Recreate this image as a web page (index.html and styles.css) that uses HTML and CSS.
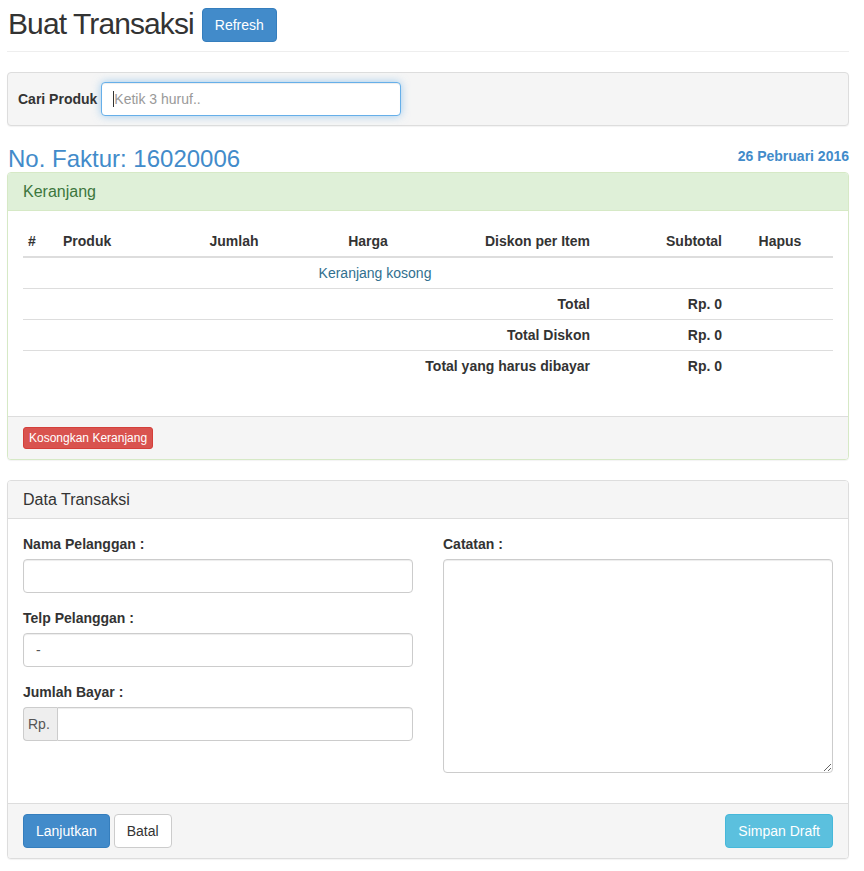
FILE: index.html
```html
<!DOCTYPE html>
<html lang="id">
<head>
<meta charset="utf-8">
<title>Buat Transaksi</title>
<link rel="stylesheet" href="styles.css">
</head>
<body>
<div class="container">
  <div class="page-header">
    <h1 class="page-title">Buat Transaksi</h1>
    <button class="btn btn-primary">Refresh</button>
  </div>

  <div class="panel panel-default search-panel">
    <div class="search-body">
      <label class="search-label">Cari Produk</label>
      <div class="search-wrap">
        <input class="form-control search-input focus" type="text" placeholder="Ketik 3 huruf..">
        <span class="caret-line"></span>
      </div>
    </div>
  </div>

  <div class="faktur-row">
    <h3 class="faktur">No. Faktur: 16020006</h3>
    <div class="tanggal">26 Pebruari 2016</div>
  </div>

  <div class="panel panel-success">
    <div class="panel-heading">Keranjang</div>
    <div class="panel-body">
      <table class="table">
        <colgroup>
          <col class="c1"><col class="c2"><col class="c3"><col class="c4"><col class="c5"><col class="c6"><col class="c7">
        </colgroup>
        <thead>
          <tr>
            <th>#</th>
            <th>Produk</th>
            <th class="center">Jumlah</th>
            <th class="center">Harga</th>
            <th class="right">Diskon per Item</th>
            <th class="right">Subtotal</th>
            <th class="center">Hapus</th>
          </tr>
        </thead>
        <tbody>
          <tr>
            <td colspan="6" class="center kosong">Keranjang kosong</td>
            <td></td>
          </tr>
          <tr>
            <td colspan="5" class="right bold">Total</td>
            <td class="right bold">Rp. 0</td>
            <td></td>
          </tr>
          <tr>
            <td colspan="5" class="right bold">Total Diskon</td>
            <td class="right bold">Rp. 0</td>
            <td></td>
          </tr>
          <tr>
            <td colspan="5" class="right bold">Total yang harus dibayar</td>
            <td class="right bold">Rp. 0</td>
            <td></td>
          </tr>
        </tbody>
      </table>
    </div>
    <div class="panel-footer">
      <button class="btn btn-danger btn-xs">Kosongkan Keranjang</button>
    </div>
  </div>

  <div class="panel panel-default">
    <div class="panel-heading">Data Transaksi</div>
    <div class="panel-body">
      <div class="form-grid">
        <div class="col">
          <div class="form-group">
            <label>Nama Pelanggan :</label>
            <input class="form-control" type="text">
          </div>
          <div class="form-group">
            <label>Telp Pelanggan :</label>
            <input class="form-control" type="text" value="-">
          </div>
          <div class="form-group">
            <label>Jumlah Bayar :</label>
            <div class="input-group">
              <span class="addon">Rp.</span>
              <input class="form-control group-input" type="text">
            </div>
          </div>
        </div>
        <div class="col">
          <div class="form-group">
            <label>Catatan :</label>
            <textarea class="form-control notes"></textarea>
          </div>
        </div>
      </div>
    </div>
    <div class="panel-footer footer-split">
      <div class="btn-row">
        <button class="btn btn-primary">Lanjutkan</button>
        <button class="btn btn-default">Batal</button>
      </div>
      <button class="btn btn-info">Simpan Draft</button>
    </div>
  </div>
</div>
</body>
</html>
```
FILE: styles.css
```css
* { box-sizing: border-box; }
html, body { margin: 0; padding: 0; background: #fff; }
body {
  font-family: "Liberation Sans", Arial, Helvetica, sans-serif;
  font-size: 14px;
  line-height: 20px;
  color: #333;
}
.container {
  width: 842px;
  margin-left: 7px;
}
.page-header {
  display: flex;
  align-items: flex-start;
  gap: 8px;
  padding: 8px 0 9px 1px;
  border-bottom: 1px solid #eee;
  margin-bottom: 20px;
}
.page-title {
  margin: 0;
  font-size: 30px;
  font-weight: 500;
  line-height: 32px;
  letter-spacing: -0.9px;
  color: #333;
}
.btn {
  display: inline-block;
  font-family: inherit;
  font-size: 14px;
  line-height: 20px;
  padding: 6px 12px;
  border: 1px solid transparent;
  border-radius: 4px;
  cursor: pointer;
  white-space: nowrap;
}
.btn-primary { background: #428bca; border-color: #357ebd; color: #fff; }
.btn-default { background: #fff; border-color: #ccc; color: #333; }
.btn-info { background: #5bc0de; border-color: #46b8da; color: #fff; }
.btn-danger { background: #d9534f; border-color: #d43f3a; color: #fff; }
.btn-xs { font-size: 12px; line-height: 18px; padding: 1px 5px; border-radius: 3px; }

.panel {
  background: #fff;
  border: 1px solid #ddd;
  border-radius: 4px;
  box-shadow: 0 1px 1px rgba(0,0,0,.05);
  margin-bottom: 20px;
}
.panel-heading {
  padding: 10px 15px;
  font-size: 16px;
  line-height: 17px;
  border-bottom: 1px solid #ddd;
  border-radius: 3px 3px 0 0;
  background: #f5f5f5;
  color: #333;
}
.panel-success { border-color: #d6e9c6; }
.panel-success .panel-heading { background: #dff0d8; border-color: #d6e9c6; color: #3c763d; }
.panel-body { padding: 15px; }
.panel-footer {
  padding: 10px 15px;
  background: #f5f5f5;
  border-top: 1px solid #ddd;
  border-radius: 0 0 3px 3px;
}
.footer-split { display: flex; justify-content: space-between; align-items: center; }
.btn-row { display: flex; gap: 4px; }

.search-panel { background: #f5f5f5; }
.search-body {
  display: flex;
  align-items: center;
  gap: 4px;
  padding: 9px 10px;
}
.search-label { font-weight: bold; }
.search-wrap { position: relative; width: 300px; }
.form-control {
  display: block;
  width: 100%;
  height: 34px;
  padding: 6px 12px;
  font-family: inherit;
  font-size: 14px;
  line-height: 20px;
  color: #555;
  background: #fff;
  border: 1px solid #ccc;
  border-radius: 4px;
  box-shadow: inset 0 1px 1px rgba(0,0,0,.075);
  outline: none;
}
.form-control::placeholder { color: #999; }
.form-control.focus {
  border-color: #66afe9;
  box-shadow: inset 0 1px 1px rgba(0,0,0,.075), 0 0 8px rgba(102,175,233,.6);
}
.caret-line {
  position: absolute;
  left: 12px;
  top: 9px;
  width: 1px;
  height: 16px;
  background: #333;
}

.faktur-row {
  display: flex;
  justify-content: space-between;
  align-items: flex-start;
}
.faktur {
  margin: 0;
  font-size: 24px;
  font-weight: 500;
  line-height: 26px;
  color: #428bca;
  padding-left: 1px;
}
.tanggal {
  font-weight: bold;
  color: #428bca;
  line-height: 20px;
}

.table {
  width: 100%;
  border-collapse: collapse;
  border-spacing: 0;
  table-layout: fixed;
  margin-bottom: 20px;
}
.c1 { width: 35px; }
.c2 { width: 122px; }
.c3 { width: 108px; }
.c4 { width: 160px; }
.c5 { width: 147px; }
.c6 { width: 132px; }
.c7 { width: 106px; }
.table th, .table td {
  padding: 5px;
  line-height: 20px;
  text-align: left;
  vertical-align: top;
}
.table th { font-weight: bold; border-bottom: 2px solid #ddd; }
.table td { border-top: 1px solid #ddd; }
.table th.center, .table td.center { text-align: center; }
.table th.right, .table td.right { text-align: right; }
.bold { font-weight: bold; }
.kosong { color: #31708f; }

.form-grid {
  display: grid;
  grid-template-columns: 390px 390px;
  column-gap: 30px;
}
.form-group { margin-bottom: 15px; }
.form-group label {
  display: block;
  font-weight: bold;
  margin-bottom: 5px;
}
.input-group { display: flex; }
.addon {
  display: block;
  width: 34px;
  height: 34px;
  padding: 6px 0 6px 4px;
  color: #555;
  background: #eee;
  border: 1px solid #ccc;
  border-right: 0;
  border-radius: 4px 0 0 4px;
  line-height: 20px;
}
.group-input { border-radius: 0 4px 4px 0; flex: 1; }
.notes { height: 214px; resize: vertical; }
```
